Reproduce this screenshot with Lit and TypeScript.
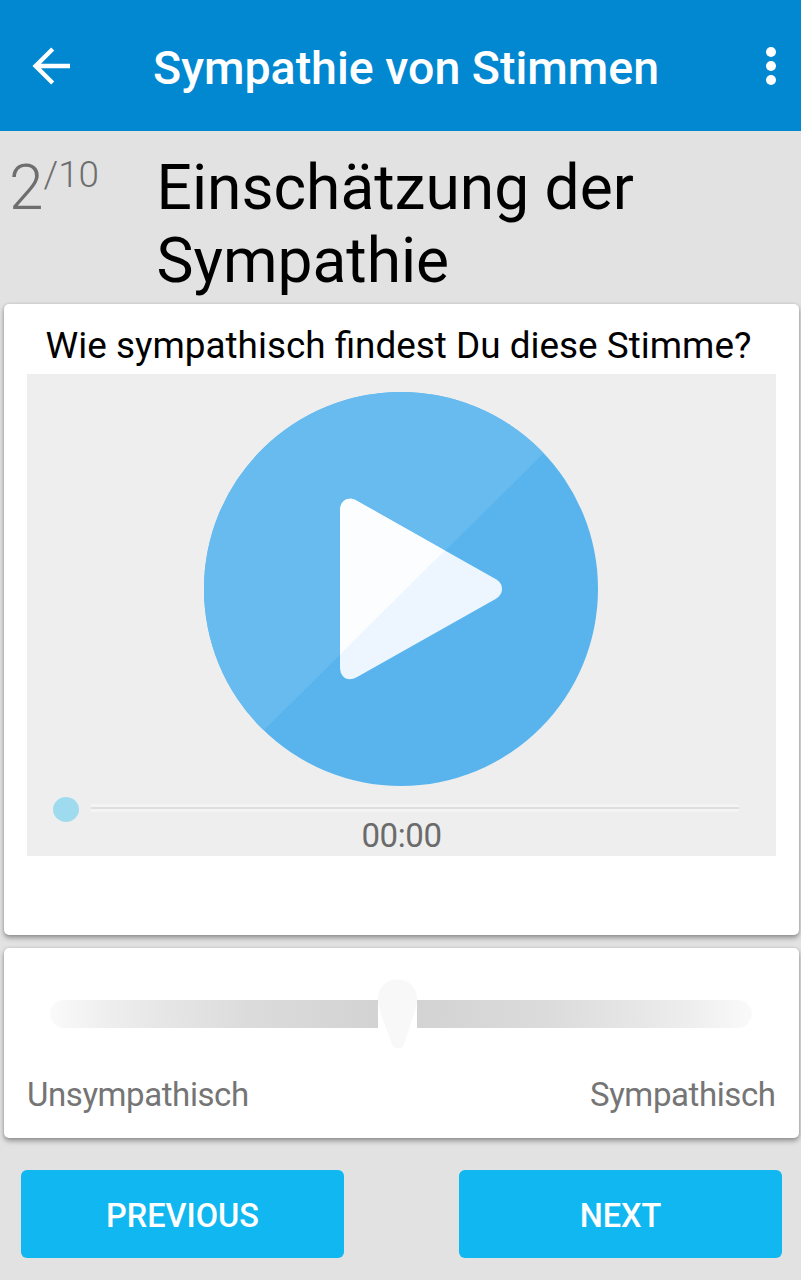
import { LitElement, html, css } from "lit";
import { customElement, property } from "lit/decorators.js";

@customElement("app-header")
class AppHeader extends LitElement {
  @property() heading = "";
  static styles = css`
    :host { display: block; }
    .bar { height: 131px; box-sizing: border-box; background: #0288d1; display: flex; align-items: center; padding: 3px 22px 0 32px; }
    .back { width: 39px; height: 38px; display: block; margin-bottom: 3px; }
    .more { width: 16px; height: 40px; display: block; margin-bottom: 2px; }
    .title { flex: 1; margin: 1px 0 0 82px; font-size: 46.5px; line-height: 54px; font-weight: 500; color: #fff; white-space: nowrap; }
  `;
  render() {
    return html`<header class="bar">
      <svg class="back" viewBox="0 0 39 38" fill="none" stroke="#fff" stroke-width="4.4"><path d="M38 19H4M20.700 2L3.600 19l17.100 17" /></svg>
      <h1 class="title">${this.heading}</h1>
      <svg class="more" viewBox="0 0 16 40" fill="#fff"><circle cx="8" cy="6" r="5" /><circle cx="8" cy="20" r="5" /><circle cx="8" cy="34" r="5" /></svg>
    </header>`;
  }
}

@customElement("audio-player")
class AudioPlayer extends LitElement {
  @property() time = "00:00";
  static styles = css`
    :host { display: block; }
    .player { box-sizing: border-box; height: 482px; background: #eee; display: flex; flex-direction: column; align-items: center; padding-top: 18px; }
    .play { width: 394px; height: 394px; display: block; margin-right: 1px; }
    .seek { align-self: stretch; display: flex; align-items: center; margin: 11px 36px 0 26px; height: 25px; gap: 12px; }
    .knob { width: 26px; height: 25px; border-radius: 50%; background: #9fdbee; }
    .line { flex: 1; height: 2px; margin-bottom: 3px; background: #dedede; border-top: 3px solid #f4f4f4; border-bottom: 3px solid #f4f4f4; border-radius: 0 4px 4px 0; }
    .time { font-size: 33px; letter-spacing: -.4px; line-height: 32px; color: #6b6b6b; margin-top: -2px; }
  `;
  render() {
    return html`<div class="player">
      <svg class="play" viewBox="0 0 394 394">
        <clipPath id="disc"><circle cx="197" cy="197" r="197" /></clipPath>
        <circle cx="197" cy="197" r="197" fill="#59b4ee" />
        <path clip-path="url(#disc)" d="M401.400 0L0 397.600V0Z" fill="#67bbef" />
        <path d="M136 119C136 108 144 104 152.700 108.700L292 187.300Q298 191 298 197T292 206.700L152.700 285.300C144 290 136 286 136 275Z" fill="#edf6fe" />
        <path d="M136 262.700V119C136 108 144 104 152.700 108.700L240.700 158.400Z" fill="#fcfdff" />
      </svg>
      <div class="seek"><span class="knob"></span><span class="line"></span></div>
      <div class="time">${this.time}</div>
    </div>`;
  }
}

@customElement("rating-slider")
class RatingSlider extends LitElement {
  static styles = css`
    :host { display: block; }
    .slider { display: flex; align-items: center; height: 70px; }
    .track { height: 28px; }
    .low { width: 328px; border-radius: 14px 0 0 14px; background: linear-gradient(90deg, #fafafa, #eeeeee 18%, #e6e6e6 35%, #dbdbdb 62%, #d3d3d3); }
    .high { flex: 1; border-radius: 0 14px 14px 0; background: linear-gradient(270deg, #fafafa, #eeeeee 18%, #e6e6e6 35%, #dbdbdb 62%, #d3d3d3); }
    .thumb { width: 39px; height: 70px; display: block; }
  `;
  render() {
    return html`<div class="slider">
      <span class="track low"></span>
      <svg class="thumb" viewBox="0 0 39 70"><path d="M0 20C0 8 9 .5 19.500 .5S39 8 39 20C39 27 36.500 33 34.500 39.500L26.500 64Q25 69.500 20 69.500T13.500 64L4.500 39.500C2.500 33 0 27 0 20Z" fill="#f8f8f8" /></svg>
      <span class="track high"></span>
    </div>`;
  }
}

@customElement("app-root")
class AppRoot extends LitElement {
  static styles = css`
    :host { display: block; font-family: Roboto, sans-serif; }
    .page { height: 1280px; background: #e2e2e2; display: flex; flex-direction: column; overflow: hidden; }
    .intro { display: flex; height: 173px; box-sizing: border-box; padding: 20px 0 0 9px; }
    .count { width: 147.500px; display: flex; align-items: flex-start; font-weight: 300; color: #6e6e6e; }
    .current { font-size: 62.200px; line-height: 73px; }
    .total { font-size: 36.800px; line-height: 44px; margin-top: 2px; }
    .title { margin: 0; font-size: 62.250px; line-height: 73px; font-weight: 400; color: #000; width: 560px; }
    .card { box-sizing: border-box; margin: 0 2.500px 0 4px; background: #fff; border-radius: 5px; box-shadow: 0 3px 5px rgba(0,0,0,.34), 0 0 3px rgba(0,0,0,.14); }
    .voice { height: 630.500px; padding: 19px 22.500px 0 23px; }
    .question { margin: 0; height: 51px; font-size: 36.880px; line-height: 46px; font-weight: 400; color: #000; text-align: center; white-space: nowrap; padding-right: 6px; }
    .scale { height: 190.500px; margin-top: 13px; padding: 31px 23px 0; }
    .slide { margin: 0 23.500px 0 23px; }
    .labels { display: flex; justify-content: space-between; font-size: 33px; letter-spacing: -.42px; line-height: 38px; color: #757575; margin-top: 27px; }
    .actions { display: flex; justify-content: space-between; padding: 31.500px 19px 0 21px; }
    .btn { appearance: none; border: 0; width: 323px; height: 88px; padding: 4px 0 0; border-radius: 6px; background: #10b7f0; color: #fff; font: 500 32.500px/38px Roboto, sans-serif; }
  `;
  render() {
    return html`<main class="page">
      <app-header heading="Sympathie von Stimmen"></app-header>
      <section class="intro">
        <div class="count"><span class="current">2</span><span class="total">/10</span></div>
        <h2 class="title">Einschätzung der Sympathie</h2>
      </section>
      <section class="card voice">
        <p class="question">Wie sympathisch findest Du diese Stimme?</p>
        <audio-player time="00:00"></audio-player>
      </section>
      <section class="card scale">
        <rating-slider class="slide"></rating-slider>
        <div class="labels"><span>Unsympathisch</span><span>Sympathisch</span></div>
      </section>
      <nav class="actions">
        <button class="btn">PREVIOUS</button>
        <button class="btn">NEXT</button>
      </nav>
    </main>`;
  }
}
